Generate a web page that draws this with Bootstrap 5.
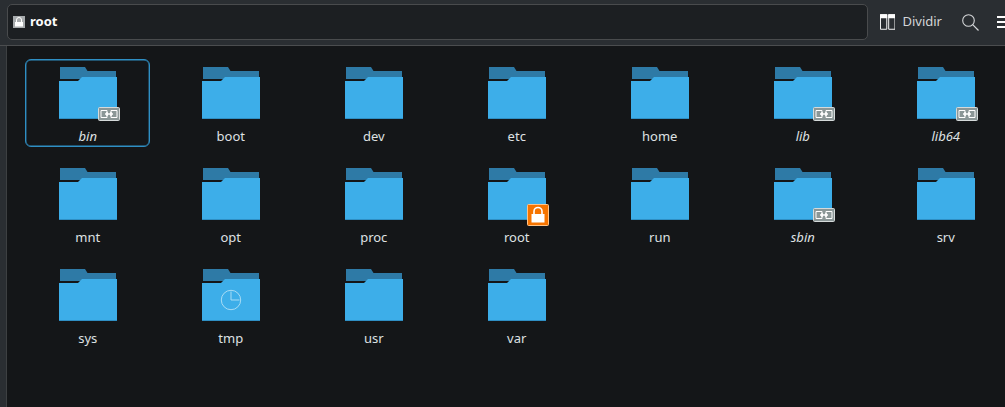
<!DOCTYPE html>
<html lang="es"><head><meta charset="utf-8"><title>root</title>
<link rel="stylesheet" href="https://cdn.jsdelivr.net/npm/bootstrap@5.3.0/dist/css/bootstrap.min.css">
<style>
html,body{height:100%;overflow:hidden;background:#141618}
body{font-family:"Noto Sans",sans-serif;font-size:13px;color:#dfe1e3;width:1005px;height:407px}
.toolbar{height:46px;background:#2a2e32;border-bottom:1px solid #4b4d4f;padding:4px 0 5px 7px}
.crumb{flex:none;width:861px;height:36px;background:#1c1f22;border:1px solid #494b4d;border-radius:5px;padding-left:5px;color:#fcfcfc;font-weight:700;gap:5px}
.split{flex:none;margin-left:12px;gap:7px;color:#d4d6d8;width:62px}
.tool-search{flex:none;margin-left:20px}
.tool-menu{margin-left:18px;flex:none}
.strip{width:7px;background:#2a2e32;border-right:1px solid #3d4042;height:361px}
.places{display:grid;grid-template-columns:repeat(7,125px);grid-auto-rows:88px;column-gap:18px;row-gap:13px;padding:13px 0 0 18px;width:1000px}
.item{position:relative;border:1px solid transparent;border-radius:6px;text-align:center;padding-top:7px;line-height:18px}
.item.sel{border-color:#2f8fc4;box-shadow:inset 0 0 0 .4px #2f8fc4}
.item svg{display:block;margin:0 auto 8px}
.item span{position:relative;left:.25px}
.item.sym{font-style:italic}
.item .badge-link{position:absolute;left:72px;top:47px;margin:0}
.item .badge-lock{position:absolute;left:72px;top:43px;margin:0}
</style></head><body>
<svg width="0" height="0" class="position-absolute"><defs>
<symbol id="folder" viewBox="0 0 58 52">
<path d="M1 0H26L28.500 4H57V12H1Z" fill="#2e7aa6"/>
<path d="M0 14H19L23 10H58V52H0Z" fill="#3daee9"/>
<path d="M0 51H58V52H0Z" fill="#2f8fc4"/>
</symbol>
<symbol id="lnk" viewBox="0 0 22 14">
<rect x=".5" y=".5" width="21" height="13" rx="1" fill="#8b9797" stroke="#d5dada"/>
<path d="M3 3.500H9V10.500H3ZM13 3.500H19V10.500H13Z" fill="none" stroke="#fff"/>
<path d="M7 7H15M9 5V9M13 5V9" stroke="#fff" stroke-width="1.500"/>
</symbol>
<symbol id="lck" viewBox="0 0 22 22">
<rect x=".5" y=".5" width="21" height="21" rx="1" fill="#f67400" stroke="#ffc48a"/>
<path d="M7 10V7.500A4 4 0 0 1 15 7.500V10" fill="none" stroke="#fff" stroke-width="1.600"/>
<rect x="4.500" y="10" width="13" height="8.500" fill="#fff"/>
</symbol></defs></svg>

<header class="toolbar d-flex align-items-center">
<div class="crumb d-flex align-items-center">
<svg width="12" height="12" viewBox="0 0 12 12"><rect width="12" height="12" fill="#a7abad"/><path d="M3.500 6V4A2.500 2.500 0 0 1 8.500 4V6" fill="none" stroke="#fff"/><rect x="2" y="6" width="8" height="4.500" fill="#fff"/></svg>
<span>root</span></div>
<div class="split d-flex align-items-center">
<svg width="16" height="16" viewBox="0 0 16 16"><path d="M.5 .5H7V15.500H.5ZM9 .5H15.500V15.500H9Z" fill="none" stroke="#fcfcfc"/><path d="M0 0H7.500V4H0ZM8.500 0H16V4H8.500Z" fill="#fcfcfc"/></svg>
<span>Dividir</span></div>
<svg class="tool-search" width="17" height="17" viewBox="0 0 17 17"><circle cx="6.500" cy="6.500" r="5.800" fill="none" stroke="#d4d6d8" stroke-width="1.100"/><path d="M10.700 10.700L16.500 16.500" stroke="#d4d6d8" stroke-width="1.200"/></svg>
<svg class="tool-menu" width="9" height="12" viewBox="0 0 9 12"><path d="M0 1H9M0 6H9M0 11H9" stroke="#fcfcfc" stroke-width="2"/></svg>
</header>
<div class="d-flex">
<div class="strip flex-shrink-0"></div>
<main class="places">
<div class="item sym sel"><svg width="58" height="52"><use href="#folder"/></svg><svg class="badge-link" width="22" height="14"><use href="#lnk"/></svg><span>bin</span></div>
<div class="item"><svg width="58" height="52"><use href="#folder"/></svg><span>boot</span></div>
<div class="item"><svg width="58" height="52"><use href="#folder"/></svg><span>dev</span></div>
<div class="item"><svg width="58" height="52"><use href="#folder"/></svg><span>etc</span></div>
<div class="item"><svg width="58" height="52"><use href="#folder"/></svg><span>home</span></div>
<div class="item sym"><svg width="58" height="52"><use href="#folder"/></svg><svg class="badge-link" width="22" height="14"><use href="#lnk"/></svg><span>lib</span></div>
<div class="item sym"><svg width="58" height="52"><use href="#folder"/></svg><svg class="badge-link" width="22" height="14"><use href="#lnk"/></svg><span>lib64</span></div>
<div class="item"><svg width="58" height="52"><use href="#folder"/></svg><span>mnt</span></div>
<div class="item"><svg width="58" height="52"><use href="#folder"/></svg><span>opt</span></div>
<div class="item"><svg width="58" height="52"><use href="#folder"/></svg><span>proc</span></div>
<div class="item"><svg width="58" height="52"><use href="#folder"/></svg><svg class="badge-lock" width="22" height="22"><use href="#lck"/></svg><span>root</span></div>
<div class="item"><svg width="58" height="52"><use href="#folder"/></svg><span>run</span></div>
<div class="item sym"><svg width="58" height="52"><use href="#folder"/></svg><svg class="badge-link" width="22" height="14"><use href="#lnk"/></svg><span>sbin</span></div>
<div class="item"><svg width="58" height="52"><use href="#folder"/></svg><span>srv</span></div>
<div class="item"><svg width="58" height="52"><use href="#folder"/></svg><span>sys</span></div>
<div class="item"><svg width="58" height="52"><use href="#folder"/><circle cx="29" cy="31" r="9.700" fill="none" stroke="#a8dcf5" stroke-width="1"/><path d="M29 22.500V31H37.500" fill="none" stroke="#a8dcf5" stroke-width="1"/></svg><span>tmp</span></div>
<div class="item"><svg width="58" height="52"><use href="#folder"/></svg><span>usr</span></div>
<div class="item"><svg width="58" height="52"><use href="#folder"/></svg><span>var</span></div>
</main></div>
<script src="https://cdn.jsdelivr.net/npm/bootstrap@5.3.0/dist/js/bootstrap.bundle.min.js"></script>
</body></html>
